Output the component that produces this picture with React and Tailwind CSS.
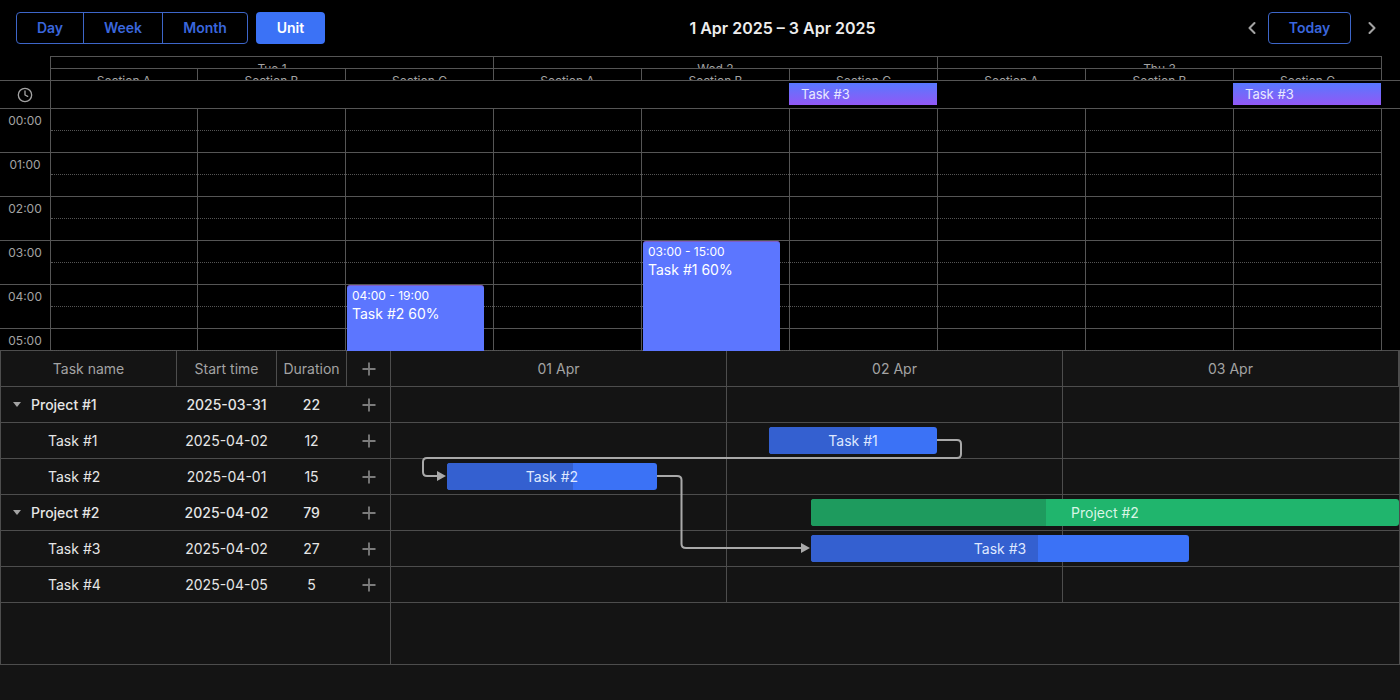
import React from 'react';
import { ChevronLeft, ChevronRight, Clock, Plus } from 'lucide-react';

const days = ['Tue 1', 'Wed 2', 'Thu 3'];
const sections = ['Section A', 'Section B', 'Section C'];
const hours = ['00:00', '01:00', '02:00', '03:00', '04:00', '05:00'];
const columns = [0, 1, 2, 3, 4, 5, 6, 7, 8];

const tasks = [
    { name: 'Project #1', start: '2025-03-31', duration: 22, project: true },
    { name: 'Task #1', start: '2025-04-02', duration: 12 },
    { name: 'Task #2', start: '2025-04-01', duration: 15 },
    { name: 'Project #2', start: '2025-04-02', duration: 79, project: true },
    { name: 'Task #3', start: '2025-04-02', duration: 27 },
    { name: 'Task #4', start: '2025-04-05', duration: 5 },
];

const bars = [
    { label: 'Task #1', left: 378, top: 40, width: 168, progress: 101 },
    { label: 'Task #2', left: 56, top: 76, width: 210, progress: 126 },
    { label: 'Project #2', left: 420, top: 112, width: 588, progress: 235, green: true },
    { label: 'Task #3', left: 420, top: 148, width: 378, progress: 227 },
];

const Scheduler = () => (
    <div className="h-[294px] bg-black">
        {/* Clipped day and section headers */}
        <div className="ml-[50px] w-[1332px] border-l border-t border-r border-[#555]">
            <div className="flex h-[11px]">
                {days.map((day, i) => (
                    <div key={day} className={`h-[11px] overflow-hidden text-center text-xs leading-[23px] text-[#a3a3a3] ${i === 1 ? 'w-[444px]' : 'w-[443px]'} ${i < 2 ? 'border-r border-[#555]' : ''}`}>{day}</div>
                ))}
            </div>
            <div className="flex h-3 border-t border-[#555]">
                {columns.map((col) => (
                    <div key={col} className={`h-[11px] overflow-hidden text-center text-xs leading-[23px] text-[#a3a3a3] ${col === 0 || col === 8 ? 'w-[147px]' : 'w-[148px]'} ${col < 8 ? 'border-r border-[#555]' : ''}`}>{sections[col % 3]}</div>
                ))}
            </div>
        </div>

        {/* All-day row */}
        <div className="flex h-[29px] border-t border-b border-[#555]">
            <div className="flex w-[51px] shrink-0 items-center justify-center border-r border-[#555] text-[#a3a3a3]">
                <Clock size={16} strokeWidth={2} />
            </div>
            {columns.map((col) => (
                <div key={col} className={`relative h-full ${col === 0 ? 'w-[147px]' : 'w-[148px]'}`}>
                    {(col === 5 || col === 8) && (
                        <div className="absolute left-[-1px] top-[2px] h-[22px] w-[148px] bg-[linear-gradient(180deg,#5878ff,#9258f5)] pl-3 text-[13px] leading-[22px] text-[#e8e8ff]">Task #3</div>
                    )}
                </div>
            ))}
        </div>

        {/* Hour grid */}
        <div className="flex h-[242px] overflow-hidden">
            <div className="w-[51px] shrink-0 border-r border-[#555]">
                {hours.map((hour) => (
                    <div key={hour} className="h-11 shrink-0 border-b border-[#555] pt-[3px] text-center text-xs leading-[18px] text-[#a3a3a3]">{hour}</div>
                ))}
            </div>
            {columns.map((col) => (
                <div key={col} className={`relative shrink-0 border-r border-[#555] ${col === 0 ? 'w-[147px]' : 'w-[148px]'}`}>
                    {hours.map((hour) => (
                        <div key={hour} className="h-11 border-b border-[#555]">
                            <div className="h-[22px] border-b border-dotted border-[#555]"></div>
                        </div>
                    ))}
                    {col === 2 && (
                        <div className="absolute left-[1px] top-[176px] h-[80px] w-[137px] rounded-t-[3px] border-t border-[#7d5cc4] bg-[#5c76ff] px-[5px] pt-[1px] text-white">
                            <div className="text-xs leading-[18px]">04:00 - 19:00</div>
                            <div className="text-sm leading-[18px]">Task #2 60%</div>
                        </div>
                    )}
                    {col === 4 && (
                        <div className="absolute left-[1px] top-[132px] h-[124px] w-[137px] rounded-t-[3px] border-t border-[#7d5cc4] bg-[#5c76ff] px-[5px] pt-[1px] text-white">
                            <div className="text-xs leading-[18px]">03:00 - 15:00</div>
                            <div className="text-sm leading-[18px]">Task #1 60%</div>
                        </div>
                    )}
                </div>
            ))}
        </div>
    </div>
);

const Links = () => (
    <svg className="absolute left-0 top-0" width="1008" height="220" fill="none">
        <path d="M546 53 H566 Q570 53 570 57 V67 Q570 71 566 71 H36 Q32 71 32 75 V85 Q32 89 36 89 H47" stroke="#a9a9a9" strokeWidth="2" />
        <polygon points="46,84 55,89 46,94" fill="#a9a9a9" />
        <path d="M266 89 H286 Q290.5 89 290.5 93 V157 Q290.5 161 295 161 H411" stroke="#a9a9a9" strokeWidth="2" />
        <polygon points="410,156 419,161 410,166" fill="#a9a9a9" />
    </svg>
);

const Gantt = () => (
    <div className="h-[350px] bg-[#141414]">
        <div className="flex h-[315px] border border-[#4d4d4d]">
            {/* Grid */}
            <div className="w-[390px] shrink-0 border-r border-[#4d4d4d]">
                <div className="flex h-9 border-b border-[#4d4d4d] text-sm leading-[35px] text-[#a3a3a3]">
                    <div className="w-[176px] border-r border-[#4d4d4d] text-center">Task name</div>
                    <div className="w-[100px] border-r border-[#4d4d4d] text-center">Start time</div>
                    <div className="w-[70px] border-r border-[#4d4d4d] text-center">Duration</div>
                    <div className="flex w-[43px] items-center justify-center text-[#7c7c7c]"><Plus size={20} strokeWidth={2.2} /></div>
                </div>
                {tasks.map((task) => (
                    <div key={task.name} className={`flex h-9 items-center border-b border-[#4d4d4d] text-sm text-[#e6e6e6] ${task.project ? 'font-medium' : ''}`}>
                        <div className="flex w-[176px] items-center">
                            {task.project ? (
                                <>
                                    <div className="ml-[12px] h-0 w-0 border-x-4 border-t-[5px] border-x-transparent border-t-[#a3a3a3]"></div>
                                    <span className="ml-[10px]">{task.name}</span>
                                </>
                            ) : (
                                <span className="ml-[47px]">{task.name}</span>
                            )}
                        </div>
                        <div className="w-[99px] text-center">{task.start}</div>
                        <div className="w-[71px] text-center">{task.duration}</div>
                        <div className="flex w-[43px] items-center justify-center text-[#7c7c7c]"><Plus size={20} strokeWidth={2.2} /></div>
                    </div>
                ))}
            </div>

            {/* Timeline */}
            <div className="w-[1008px] shrink-0">
                <div className="flex h-9 border-b border-[#4d4d4d]">
                    {['01 Apr', '02 Apr', '03 Apr'].map((date) => (
                        <div key={date} className="w-[336px] border-r border-[#4d4d4d] text-center text-sm leading-[35px] text-[#a3a3a3]">{date}</div>
                    ))}
                </div>
                <div className="relative h-[216px]">
                    {tasks.map((task) => (
                        <div key={task.name} className="flex h-9 border-b border-[#4d4d4d]">
                            <div className="w-[336px] border-r border-[#4d4d4d]"></div>
                            <div className="w-[336px] border-r border-[#4d4d4d]"></div>
                        </div>
                    ))}
                    <Links />
                    {bars.map((bar) => (
                        <div
                            key={bar.label}
                            className={`absolute flex h-[27px] items-center justify-center overflow-hidden rounded-[3px] text-sm ${bar.green ? 'bg-[#20b56d] text-[#d9f5e6]' : 'bg-[#3b72f6] text-[#dfe8ff]'}`}
                            style={{ left: bar.left, top: bar.top, width: bar.width }}
                        >
                            <div className={`absolute bottom-0 left-0 top-0 ${bar.green ? 'bg-[#1e9b5e]' : 'bg-[#3460d0]'}`} style={{ width: bar.progress }}></div>
                            <span className="relative">{bar.label}</span>
                        </div>
                    ))}
                </div>
            </div>
        </div>
    </div>
);

const App = () => {
    return (
        <div className="h-[700px] w-[1400px] overflow-hidden bg-black font-['Inter',sans-serif]">
            {/* Toolbar */}
            <div className="flex h-14 items-center justify-between pl-4 pr-3">
                <div className="flex items-center gap-2">
                    <div className="flex h-8 rounded-[4px] border border-[#3d66c9] text-sm font-semibold leading-[30px] text-[#3a66dc]">
                        <div className="w-[67px] border-r border-[#3d66c9] text-center">Day</div>
                        <div className="w-[79px] border-r border-[#3d66c9] text-center">Week</div>
                        <div className="w-[84px] text-center">Month</div>
                    </div>
                    <div className="h-8 w-[69px] rounded-[4px] bg-[#3b72f6] text-center text-sm font-semibold leading-8 text-white">Unit</div>
                </div>
                <div className="ml-1 text-base font-semibold text-[#ededed]">1 Apr 2025 – 3 Apr 2025</div>
                <div className="flex items-center">
                    <div className="flex w-8 justify-center text-[#a3a3a3]"><ChevronLeft size={20} strokeWidth={2.5} /></div>
                    <div className="h-8 w-[83px] rounded-[4px] border border-[#3d66c9] text-center text-sm font-semibold leading-[30px] text-[#3a66dc]">Today</div>
                    <div className="ml-[5px] flex w-8 justify-center text-[#a3a3a3]"><ChevronRight size={20} strokeWidth={2.5} /></div>
                </div>
            </div>
            <Scheduler />
            <Gantt />
        </div>
    );
};

export default App;
